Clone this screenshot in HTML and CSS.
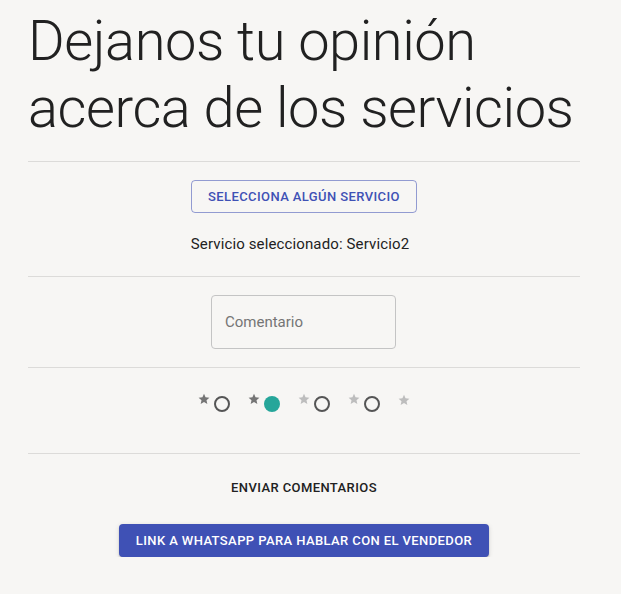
FILE: index.html
```html
<!DOCTYPE html>
<html lang="es">
<head>
<meta charset="utf-8">
<link rel="stylesheet" href="styles.css">
</head>
<body>
<main class="page">
  <h1 class="title">Dejanos tu opinión acerca de los servicios</h1>
  <div class="divider"></div>
  <section class="sec sec-service">
    <button class="btn-outlined">SELECCIONA ALGÚN SERVICIO</button>
    <p class="selected">Servicio seleccionado: Servicio2</p>
  </section>
  <div class="divider"></div>
  <section class="sec sec-comment">
    <div class="field"><span class="placeholder">Comentario</span></div>
  </section>
  <div class="divider"></div>
  <section class="sec sec-rating">
    <div class="rating">
      <div class="item">
        <svg class="star dark" viewBox="0 0 24 24"><path d="M12 1.5l3.1 7.1 7.7.7-5.8 5.1 1.7 7.6L12 18l-6.7 4 1.7-7.6-5.8-5.1 7.7-.7z"/></svg>
        <span class="radio"></span>
      </div>
      <div class="item">
        <svg class="star dark" viewBox="0 0 24 24"><path d="M12 1.5l3.1 7.1 7.7.7-5.8 5.1 1.7 7.6L12 18l-6.7 4 1.7-7.6-5.8-5.1 7.7-.7z"/></svg>
        <span class="radio checked"></span>
      </div>
      <div class="item">
        <svg class="star light" viewBox="0 0 24 24"><path d="M12 1.5l3.1 7.1 7.7.7-5.8 5.1 1.7 7.6L12 18l-6.7 4 1.7-7.6-5.8-5.1 7.7-.7z"/></svg>
        <span class="radio"></span>
      </div>
      <div class="item">
        <svg class="star light" viewBox="0 0 24 24"><path d="M12 1.5l3.1 7.1 7.7.7-5.8 5.1 1.7 7.6L12 18l-6.7 4 1.7-7.6-5.8-5.1 7.7-.7z"/></svg>
        <span class="radio"></span>
      </div>
      <div class="item last">
        <svg class="star light" viewBox="0 0 24 24"><path d="M12 1.5l3.1 7.1 7.7.7-5.8 5.1 1.7 7.6L12 18l-6.7 4 1.7-7.6-5.8-5.1 7.7-.7z"/></svg>
      </div>
    </div>
  </section>
  <div class="divider"></div>
  <section class="sec sec-actions">
    <button class="btn-text">ENVIAR COMENTARIOS</button>
    <button class="btn-contained">LINK A WHATSAPP PARA HABLAR CON EL VENDEDOR</button>
  </section>
</main>
</body>
</html>
```

FILE: styles.css
```css
html, body {
  background: #f7f6f4;
}
body {
  margin: 8px 0 0 28px;
  font-family: Roboto, "Noto Sans", sans-serif;
  color: #212121;
}
.page {
  width: 552px;
  display: flex;
  flex-direction: column;
}
.title {
  margin: 0;
  font-weight: 300;
  font-size: 56px;
  line-height: 1.2;
  letter-spacing: -0.45px;
  color: #212121;
}
.divider {
  height: 1px;
  background: #dcdbd9;
}
.title + .divider {
  margin-top: 18.6px;
}
.sec {
  display: flex;
  flex-direction: column;
  align-items: center;
}
.sec-service {
  padding: 18px 0 22px;
}
.btn-outlined {
  font-family: Roboto, sans-serif;
  font-weight: 500;
  font-size: 13px;
  line-height: 19px;
  letter-spacing: 0.4px;
  color: #3f51b5;
  background: transparent;
  border: 1px solid rgba(63, 81, 181, 0.55);
  border-radius: 4px;
  padding: 6px 16px;
  cursor: pointer;
}
.selected {
  margin: 21px 8px 0 0;
  font-size: 15px;
  line-height: 20px;
  letter-spacing: 0.13px;
  color: #222;
}
.sec-comment {
  padding: 18px 0;
}
.field {
  width: 185px;
  height: 54px;
  box-sizing: border-box;
  border: 1px solid #c4c4c4;
  border-radius: 4px;
  display: flex;
  align-items: center;
  padding-left: 13px;
  margin-left: -1px;
}
.placeholder {
  font-size: 15px;
  color: #757575;
}
.sec-rating {
  padding: 27px 0 38px;
}
.rating {
  display: flex;
  gap: 18px;
}
.item {
  display: flex;
  align-items: flex-start;
  gap: 4px;
  height: 20px;
}
.star {
  width: 12px;
  height: 12px;
  margin-top: -2px;
}
.star.dark { fill: #757575; }
.star.light { fill: #bdbdbd; }
.item.last .star { margin-top: -1px; }
.radio {
  width: 16px;
  height: 16px;
  box-sizing: border-box;
  border: 2px solid #555;
  border-radius: 50%;
  margin-top: 1px;
}
.radio.checked {
  border: none;
  background: #26a69a;
}
.sec-actions {
  padding-top: 17px;
}
.btn-text {
  font-family: Roboto, sans-serif;
  font-weight: 500;
  font-size: 13px;
  line-height: 21px;
  letter-spacing: 0.4px;
  color: #212121;
  background: transparent;
  border: none;
  padding: 6px 8px;
}
.btn-contained {
  margin-top: 20px;
  font-family: Roboto, sans-serif;
  font-weight: 500;
  font-size: 13px;
  line-height: 21px;
  letter-spacing: 0.4px;
  color: #fff;
  background: #3f51b5;
  border: none;
  border-radius: 4px;
  padding: 6px 17px;
  box-shadow: 0 3px 1px -2px rgba(0,0,0,0.2), 0 2px 2px 0 rgba(0,0,0,0.14), 0 1px 5px 0 rgba(0,0,0,0.12);
}
```
